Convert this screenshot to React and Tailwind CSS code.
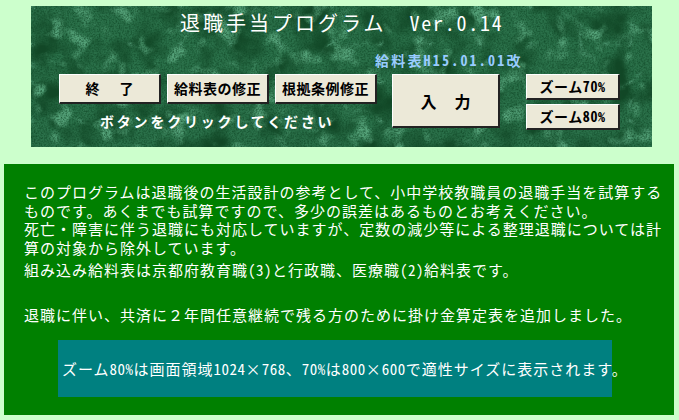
const JP = 'font-["Noto_Sans_CJK_JP","Noto_Sans_CJK_SC",sans-serif]';

function Marble() {
  return (
    <svg className="absolute inset-0 w-full h-full" aria-hidden="true">
      <defs>
        <filter id="veins" x="0" y="0" width="100%" height="100%" colorInterpolationFilters="sRGB">
          <feTurbulence type="turbulence" baseFrequency="0.02 0.026" numOctaves="3" seed="7" result="big" />
          <feColorMatrix in="big" type="matrix" values="0 0 0 0 0  0 0 0 0 0  0 0 0 0 0  1.3 1.3 0 0 -0.05" result="a" />
          <feComponentTransfer in="a" result="b">
            <feFuncA type="table" tableValues="0.7 0.4 0.15 0.02 0 0 0 0" />
          </feComponentTransfer>
          <feFlood floodColor="#5aa57f" />
          <feComposite in2="b" operator="in" />
        </filter>
        <filter id="grain" x="0" y="0" width="100%" height="100%" colorInterpolationFilters="sRGB">
          <feTurbulence type="fractalNoise" baseFrequency="0.6" numOctaves="2" seed="4" />
          <feColorMatrix type="matrix" values="0 0 0 0 0.06  0 0 0 0 0.28  0 0 0 0 0.15  1.6 0 0 0 -0.6" />
        </filter>
        <filter id="blotch" x="0" y="0" width="100%" height="100%" colorInterpolationFilters="sRGB">
          <feTurbulence type="fractalNoise" baseFrequency="0.03" numOctaves="3" seed="23" />
          <feColorMatrix type="matrix" values="0 0 0 0 0.07  0 0 0 0 0.28  0 0 0 0 0.15  3 0 0 0 -1.3" />
        </filter>
        <filter id="patch" x="0" y="0" width="100%" height="100%" colorInterpolationFilters="sRGB">
          <feTurbulence type="fractalNoise" baseFrequency="0.05" numOctaves="2" seed="41" />
          <feColorMatrix type="matrix" values="0 0 0 0 0.33  0 0 0 0 0.63  0 0 0 0 0.47  5 0 0 0 -2.8" />
        </filter>
      </defs>
      <rect width="100%" height="100%" fill="#2a7049" />
      <rect width="100%" height="100%" filter="url(#blotch)" />
      <rect width="100%" height="100%" filter="url(#patch)" />
      <rect width="100%" height="100%" filter="url(#veins)" />
      <rect width="100%" height="100%" filter="url(#grain)" />
    </svg>
  );
}

function Btn({ className, children }) {
  return (
    <button className={`bg-[#ece9d8] text-black font-bold flex items-center justify-center whitespace-nowrap border-t border-l border-t-white border-l-white border-r-2 border-b-2 border-r-[#222] border-b-[#222] [font-feature-settings:'hwid'] ${className}`}>
      {children}
    </button>
  );
}

// half width runs keep to 8px a character
function Han({ children }) {
  return <span className="tracking-[0.5px]">{children}</span>;
}

export default function App() {
  return (
    <div className={`h-[420px] w-[679px] overflow-hidden bg-[#ccffcc] pt-[6px] ${JP}`}>
      <div className="relative ml-[31px] h-[141px] w-[621px] text-white">
        <Marble />
        <div className="relative">
          <h1 className="flex h-[34px] items-center pl-[149px] text-[20px] leading-none font-normal tracking-[3px] whitespace-nowrap [font-feature-settings:'hwid']">
            退職手当プログラム
            <span className="ml-[23px] tracking-[1.75px]">Ver.0.14</span>
          </h1>
          <p className="mt-[10px] h-[20px] pl-[344px] text-[14px] leading-[20px] font-bold tracking-[2.2px] whitespace-nowrap text-[#99ccff] [font-feature-settings:'hwid']">
            給料表H15.01.01改
          </p>
          <div className="mt-[4px] flex items-start pl-[28px]">
            <div className="w-[333px]">
              <div className="flex gap-[6px]">
                <Btn className="h-[30px] w-[102px] text-[14px]">終<span className="ml-[20px]">了</span></Btn>
                <Btn className="h-[30px] w-[102px] text-[14px] tracking-[0.5px]">給料表の修正</Btn>
                <Btn className="h-[30px] w-[102px] text-[14px] tracking-[0.5px]">根拠条例修正</Btn>
              </div>
              <p className="mt-[5px] pl-[41px] text-[14px] leading-[24px] font-bold tracking-[2.8px] whitespace-nowrap">ボタンをクリックしてください</p>
            </div>
            <Btn className="h-[54px] w-[108px] text-[16px]">入<span className="ml-[18px]">力</span></Btn>
            <div className="ml-[26px] flex flex-col gap-[4px]">
              <Btn className="h-[26px] w-[94px] text-[14px] tracking-[0.6px]">ズーム70%</Btn>
              <Btn className="h-[26px] w-[94px] text-[14px] tracking-[0.6px]">ズーム80%</Btn>
            </div>
          </div>
        </div>
      </div>

      <div className="mt-[17px] ml-[4px] h-[251px] w-[670px] bg-[#008000] pt-[19px] text-[15px] font-normal tracking-[1px] text-white [font-feature-settings:'hwid']">
        <div className="pl-[20px] leading-[18.6px] whitespace-nowrap">
          <p>このプログラムは退職後の生活設計の参考として、小中学校教職員の退職手当を試算する</p>
          <p>ものです。あくまでも試算ですので、多少の誤差はあるものとお考えください。</p>
          <p>死亡・障害に伴う退職にも対応していますが、定数の減少等による整理退職については計</p>
          <p>算の対象から除外しています。</p>
          <p className="mt-[4px]">組み込み給料表は京都府教育職<Han>(3)</Han>と行政職、医療職<Han>(2)</Han>給料表です。</p>
          <p className="mt-[26px]">退職に伴い、共済に<span className="[font-feature-settings:normal]">２</span>年間任意継続で残る方のために掛け金算定表を追加しました。</p>
        </div>
        <div className="mt-[15px] ml-[54px] flex h-[57px] w-[554px] items-center bg-[#008080] pt-[3px] pl-[4px] whitespace-nowrap">
          <p>ズーム<Han>80%</Han>は画面領域<Han>1024</Han>×<Han>768</Han>、<Han>70%</Han>は<Han>800</Han>×<Han>600</Han>で適性サイズに表示されます。</p>
        </div>
      </div>
    </div>
  );
}
